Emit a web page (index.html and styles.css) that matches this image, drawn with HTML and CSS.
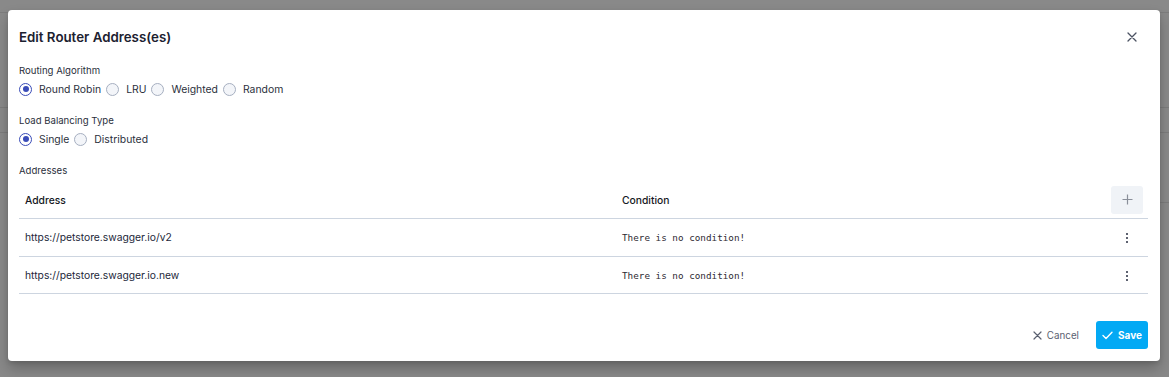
FILE: index.html
```html
<!DOCTYPE html>
<html lang="en">
<head>
  <meta charset="UTF-8" />
  <title>Edit Router Address(es)</title>
  <link rel="stylesheet" href="styles.css">
</head>
<body>

  <!-- page behind the overlay -->
  <div class="page">
    <div class="page-line first"></div>
    <div class="page-line second"></div>
    <div class="page-line third"></div>
    <div class="page-line fourth"></div>
  </div>

  <div class="modal">
    <div class="modal-head">
      <h2>Edit Router Address(es)</h2>
      <button class="close-btn" aria-label="Close">
        <svg width="10" height="10" viewBox="0 0 10 10"><path d="M1 1L9 9M9 1L1 9" stroke="#4b5262" stroke-width="1.3" stroke-linecap="round"/></svg>
      </button>
    </div>

    <div class="modal-body">
      <div class="field">
        <div class="field-label">Routing Algorithm</div>
        <div class="radio-group">
          <label class="radio checked"><span class="dot"></span>Round Robin</label>
          <label class="radio"><span class="dot"></span>LRU</label>
          <label class="radio"><span class="dot"></span>Weighted</label>
          <label class="radio"><span class="dot"></span>Random</label>
        </div>
      </div>

      <div class="field">
        <div class="field-label">Load Balancing Type</div>
        <div class="radio-group">
          <label class="radio checked"><span class="dot"></span>Single</label>
          <label class="radio"><span class="dot"></span>Distributed</label>
        </div>
      </div>

      <div class="field-label addresses">Addresses</div>
      <table class="addr-table">
        <thead>
          <tr>
            <th class="col-addr">Address</th>
            <th class="col-cond">Condition</th>
            <th class="col-act">
              <button class="add-btn" aria-label="Add">
                <svg width="11" height="11" viewBox="0 0 11 11"><path d="M5.5 0.5V10.5M0.5 5.5H10.5" stroke="#8a8f9a" stroke-width="1.2"/></svg>
              </button>
            </th>
          </tr>
        </thead>
        <tbody>
          <tr>
            <td>https://petstore.swagger.io/v2</td>
            <td><code>There is no condition!</code></td>
            <td class="col-act"><span class="kebab"><i></i><i></i><i></i></span></td>
          </tr>
          <tr>
            <td>https://petstore.swagger.io.new</td>
            <td><code>There is no condition!</code></td>
            <td class="col-act"><span class="kebab"><i></i><i></i><i></i></span></td>
          </tr>
        </tbody>
      </table>
    </div>

    <div class="modal-foot">
      <button class="btn-cancel">
        <svg width="9" height="9" viewBox="0 0 9 9"><path d="M1 1L8 8M8 1L1 8" stroke="#5a6070" stroke-width="1.2" stroke-linecap="round"/></svg>
        Cancel
      </button>
      <button class="btn-save">
        <svg width="11" height="9" viewBox="0 0 11 9"><path d="M1 4.6L4 7.5L10 1.2" stroke="#fff" stroke-width="1.4" fill="none" stroke-linecap="round" stroke-linejoin="round"/></svg>
        Save
      </button>
    </div>
  </div>

</body>
</html>
```

FILE: styles.css
```css
body {
  margin: 0;
  font-family: Inter, "Noto Sans", sans-serif;
  background: #898989;
  height: 377px;
  overflow: hidden;
}

/* Faint page behind the overlay */
.page {
  height: 377px;
}

.page-line {
  height: 1px;
  background: #7c7c7c;
}

.page-line.first { margin-top: 12px; }
.page-line.second { margin-top: 94px; }
.page-line.third { margin-top: 24px; }
.page-line.fourth { margin-top: 69px; margin-left: 1160px; }

/* Modal */
.modal {
  position: absolute;
  left: 8px;
  top: 10px;
  width: 1152px;
  height: 351px;
  background: #fff;
  border-radius: 4px;
  box-shadow: 0 8px 14px rgba(0, 0, 0, 0.22), 0 2px 4px rgba(0, 0, 0, 0.12);
  display: flex;
  flex-direction: column;
  color: #1f2433;
}

.modal-head {
  height: 54px;
  display: flex;
  align-items: center;
  justify-content: space-between;
  padding: 0 23px 0 11px;
}

.modal-head h2 {
  margin: 0;
  font-size: 13.3px;
  font-weight: 600;
  color: #1c2130;
}

.close-btn {
  background: none;
  border: none;
  padding: 0;
  width: 10px;
  height: 10px;
  display: flex;
  cursor: pointer;
}

.modal-body {
  padding: 0 12px 0 11px;
  flex: 1;
}

.field {
  margin-bottom: 16px;
}

.field-label {
  font-size: 9.6px;
  line-height: 14px;
  color: #2a2f3c;
  margin-bottom: 2px;
}

.field-label.addresses {
  margin-top: 2px;
  margin-bottom: 7px;
}

.radio-group {
  display: flex;
  align-items: center;
  height: 18px;
}

.radio {
  display: flex;
  align-items: center;
  font-size: 10.4px;
  color: #2b303c;
  margin-right: 5px;
}

.radio .dot {
  width: 11px;
  height: 11px;
  border: 1px solid #a6afc0;
  border-radius: 50%;
  background: #f3f5f9;
  margin-right: 7px;
  display: flex;
  align-items: center;
  justify-content: center;
}

.radio.checked .dot {
  border-color: #3a4cb8;
  background: #fff;
}

.radio.checked .dot::after {
  content: "";
  width: 6px;
  height: 6px;
  border-radius: 50%;
  background: #3a4cb8;
}

/* Addresses table */
.addr-table {
  width: 100%;
  border-collapse: collapse;
  font-size: 10.3px;
}

.addr-table th {
  text-align: left;
  font-weight: 500;
  color: #151822;
  height: 29px;
  padding: 0 6px 4px;
  border-bottom: 1px solid #cdd5e0;
}

.addr-table td {
  height: 36.5px;
  padding: 0 6px;
  color: #23283a;
  border-bottom: 1px solid #cdd5e0;
}

.col-addr { width: 585px; }

.addr-table .col-act {
  width: 32px;
  text-align: right;
  padding-left: 0;
  padding-right: 5px;
}

.add-btn {
  width: 32px;
  height: 28px;
  border: none;
  border-radius: 3px;
  background: #f0f3f7;
  display: inline-flex;
  align-items: center;
  justify-content: center;
  vertical-align: middle;
}

.kebab {
  display: inline-flex;
  flex-direction: column;
  gap: 2px;
  width: 2px;
  margin-right: 15px;
  vertical-align: middle;
}

.kebab i {
  width: 2px;
  height: 2px;
  background: #5d6270;
}

code {
  font-family: "DejaVu Sans Mono", "Liberation Mono", monospace;
  font-size: 9.3px;
  color: #2e2a33;
}

/* Footer */
.modal-foot {
  display: flex;
  justify-content: flex-end;
  align-items: center;
  padding: 0 12px 12px 0;
  gap: 17px;
}

.btn-cancel {
  display: flex;
  align-items: center;
  gap: 5px;
  background: none;
  border: none;
  font-family: inherit;
  font-size: 9.8px;
  color: #5a6070;
  padding: 0;
}

.btn-save {
  display: flex;
  align-items: center;
  justify-content: center;
  gap: 5px;
  width: 52px;
  height: 28px;
  border: none;
  border-radius: 3px;
  background: #03a9f4;
  color: #fff;
  font-family: inherit;
  font-size: 10px;
  font-weight: 700;
  padding: 0;
}
```
